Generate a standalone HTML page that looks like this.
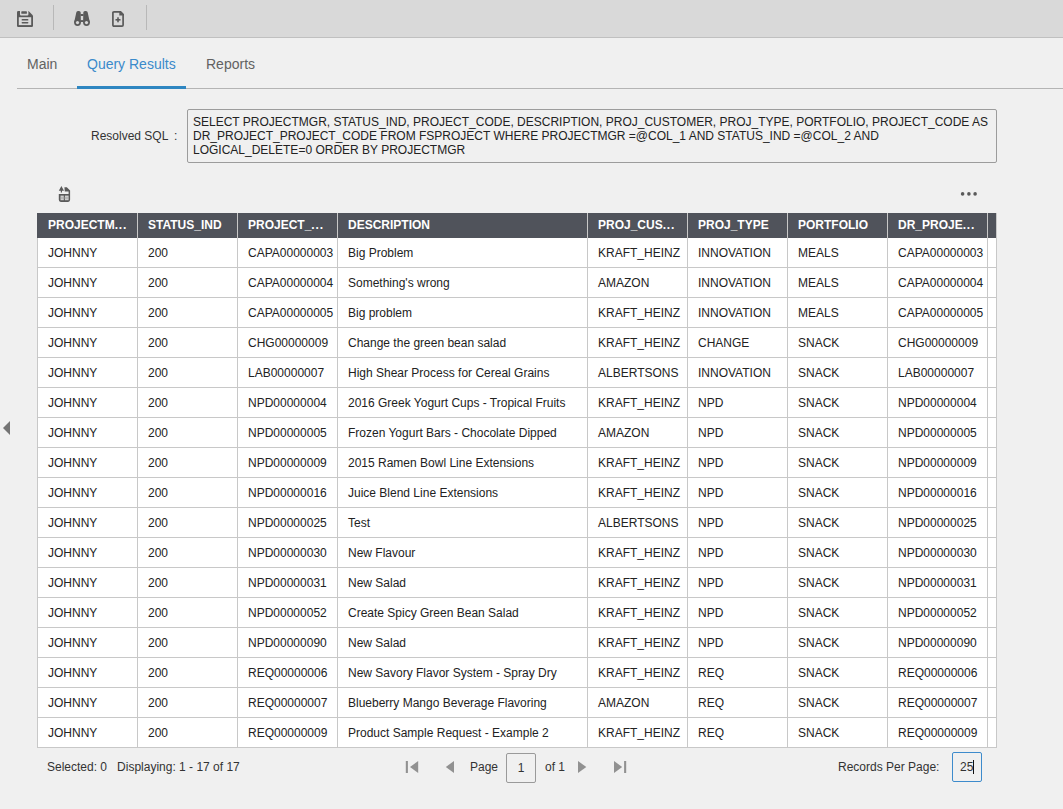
<!DOCTYPE html>
<html><head><meta charset="utf-8">
<style>
*{box-sizing:border-box;margin:0;padding:0}
html,body{width:1063px;height:809px;overflow:hidden;background:#f0f0f0;font-family:"Liberation Sans",sans-serif;color:#333}
.abs{position:absolute}
#toolbar{position:absolute;left:0;top:0;width:1063px;height:38px;background:#d9d9d9;border-bottom:1px solid #c0c0c0}
.sep{position:absolute;top:5px;width:1px;height:25px;background:#b8b8b8}
#tabline{position:absolute;left:17px;top:88px;width:1046px;height:1px;background:#b4b4b4}
#tabact{position:absolute;left:77px;top:86px;width:109px;height:3px;background:#2e86c1}
.tab{position:absolute;top:56px;font-size:14px;color:#626262;white-space:nowrap}
.lbl{position:absolute;font-size:12px;color:#333;white-space:pre}
#sqlbox{position:absolute;left:187px;top:109px;width:810px;height:54px;border:1px solid #9c9c9c;border-radius:2px;background:#f0f0f0;font-size:12px;line-height:14px;padding:5px 5px;color:#222}
table{position:absolute;left:37px;top:213px;border-collapse:separate;border-spacing:0;table-layout:fixed;width:960px;font-size:12px}
th{background:#50535b;color:#fff;font-weight:bold;text-align:left;height:25px;padding:0 0 1px 10px;border-right:1px solid #c8c8c8;white-space:nowrap;overflow:hidden}
th:first-child{padding-left:10px;border-left:1px solid #50535b}
th i{font-style:normal;letter-spacing:0.8px}
td{background:#fff;height:30px;padding:0 0 0 10px;border-right:1px solid #c8c8c8;border-bottom:1px solid #c8c8c8;white-space:nowrap;overflow:hidden;color:#222}
td:first-child{padding-left:10px;border-left:1px solid #c8c8c8}
.pbox{position:absolute;border:1px solid #9a9a9a;border-radius:2px;background:#f0f0f0;font-size:12px;text-align:center}
</style></head><body>
<div id="toolbar">
 <div class="sep" style="left:53px"></div>
 <div class="sep" style="left:146px"></div>
 <svg class="abs" style="left:17px;top:11px" width="16" height="16" viewBox="0 0 16 16">
<path d="M1.2,0 H11.6 L16,4.4 V14.8 Q16,16 14.8,16 H1.2 Q0,16 0,14.8 V1.2 Q0,0 1.2,0 Z" fill="#5a5a5a"/>
<path d="M3,0 H11.4 V3.6 Q11.4,4.6 10.4,4.6 H4 Q3,4.6 3,3.6 Z" fill="#d9d9d9"/>
<rect x="4.3" y="0.3" width="5.6" height="2.5" rx="0.6" fill="#5a5a5a"/>
<rect x="1.8" y="6.2" width="12.4" height="7.9" fill="#d9d9d9"/>
<rect x="4.6" y="8.1" width="6.8" height="1.5" rx="0.7" fill="#5a5a5a"/>
<rect x="4.6" y="10.9" width="6.8" height="1.5" rx="0.7" fill="#5a5a5a"/>
</svg>
 <svg class="abs" style="left:74px;top:11px" width="16" height="15" viewBox="0 0 16 15">
<path d="M2.3,1.6 Q2.4,0 4,0 H5 Q6.6,0 6.7,1.6 L6.9,11.6 H0.1 Z" fill="#5a5a5a"/>
<path d="M13.7,1.6 Q13.6,0 12,0 H11 Q9.4,0 9.3,1.6 L9.1,11.6 H15.9 Z" fill="#5a5a5a"/>
<circle cx="3.5" cy="11.6" r="3.4" fill="#5a5a5a"/>
<circle cx="12.5" cy="11.6" r="3.4" fill="#5a5a5a"/>
<circle cx="3.5" cy="11.6" r="1.6" fill="#d9d9d9"/>
<circle cx="12.5" cy="11.6" r="1.6" fill="#d9d9d9"/>
<rect x="6.5" y="3" width="3" height="2" fill="#5a5a5a"/>
<rect x="6.5" y="9.1" width="3" height="1.9" fill="#5a5a5a"/>
</svg>
 <svg class="abs" style="left:112px;top:11px" width="12" height="16" viewBox="0 0 12 16">
<path d="M2,0.9 H8.4 L11.1,3.6 V14 Q11.1,15.1 10,15.1 H2 Q0.9,15.1 0.9,14 V2 Q0.9,0.9 2,0.9 Z" fill="none" stroke="#5a5a5a" stroke-width="1.7"/>
<path d="M7.3,0.1 H8.7 L11.9,3.3 V4.6 H7.3 Z" fill="#5a5a5a"/>
<rect x="3.5" y="8" width="5" height="1.6" fill="#5a5a5a"/>
<rect x="5.2" y="6.3" width="1.6" height="5" fill="#5a5a5a"/>
</svg>
</div>
<div class="tab" style="left:27px">Main</div>
<div class="tab" style="left:87px;color:#3a8acb">Query Results</div>
<div class="tab" style="left:206px">Reports</div>
<div id="tabline"></div>
<div id="tabact"></div>
<div class="lbl" style="left:91px;top:129px">Resolved SQL</div>
<div class="lbl" style="left:174px;top:129px">:</div>
<div id="sqlbox">SELECT PROJECTMGR, STATUS_IND, PROJECT_CODE, DESCRIPTION, PROJ_CUSTOMER, PROJ_TYPE, PORTFOLIO, PROJECT_CODE AS DR_PROJECT_PROJECT_CODE FROM FSPROJECT WHERE PROJECTMGR =@COL_1 AND STATUS_IND =@COL_2 AND LOGICAL_DELETE=0 ORDER BY PROJECTMGR</div>
<svg class="abs" style="left:58px;top:185px" width="14" height="18" viewBox="0 0 14 18">
<path d="M3.4,1 L6,5.8 H4 V7.6 H2.8 V5.8 H0.8 Z" fill="#5a5a5a"/>
<path d="M6.4,2.2 H8.8 L12.1,5.5 V14.8 Q12.1,16.9 10.1,16.9 H2.8 Q0.8,16.9 0.8,14.8 V8.9 H10.6 V6.6 H6.8 Z" fill="#5a5a5a"/>
<rect x="2.5" y="10.6" width="3.3" height="4.6" fill="#cfcfcf"/>
<rect x="6.9" y="10.6" width="3.7" height="4.6" fill="#cfcfcf"/>
<rect x="2.5" y="12.6" width="8.1" height="0.8" fill="#999"/>
</svg>
<svg class="abs" style="left:958px;top:189px" width="22" height="9" viewBox="0 0 22 9">
<circle cx="4.6" cy="4.9" r="1.8" fill="#5a5a5a"/><circle cx="10.9" cy="4.9" r="1.8" fill="#5a5a5a"/><circle cx="17.1" cy="4.9" r="1.8" fill="#5a5a5a"/>
</svg>
<svg class="abs" style="left:2px;top:420px" width="10" height="16" viewBox="0 0 10 16"><path d="M1,8 L8,1 V15 Z" fill="#747474"/></svg>
<table>
<colgroup><col style="width:101px"><col style="width:100px"><col style="width:100px"><col style="width:250px"><col style="width:100px"><col style="width:100px"><col style="width:100px"><col style="width:100px"><col style="width:9px"></colgroup>
<tr><th>PROJECTM<i>...</i></th><th>STATUS_IND</th><th>PROJECT_<i>...</i></th><th>DESCRIPTION</th><th>PROJ_CUS<i>...</i></th><th>PROJ_TYPE</th><th>PORTFOLIO</th><th>DR_PROJE<i>...</i></th><th></th></tr>
<tr><td>JOHNNY</td><td>200</td><td>CAPA00000003</td><td>Big Problem</td><td>KRAFT_HEINZ</td><td>INNOVATION</td><td>MEALS</td><td>CAPA00000003</td><td></td></tr>
<tr><td>JOHNNY</td><td>200</td><td>CAPA00000004</td><td>Something's wrong</td><td>AMAZON</td><td>INNOVATION</td><td>MEALS</td><td>CAPA00000004</td><td></td></tr>
<tr><td>JOHNNY</td><td>200</td><td>CAPA00000005</td><td>Big problem</td><td>KRAFT_HEINZ</td><td>INNOVATION</td><td>MEALS</td><td>CAPA00000005</td><td></td></tr>
<tr><td>JOHNNY</td><td>200</td><td>CHG00000009</td><td>Change the green bean salad</td><td>KRAFT_HEINZ</td><td>CHANGE</td><td>SNACK</td><td>CHG00000009</td><td></td></tr>
<tr><td>JOHNNY</td><td>200</td><td>LAB00000007</td><td>High Shear Process for Cereal Grains</td><td>ALBERTSONS</td><td>INNOVATION</td><td>SNACK</td><td>LAB00000007</td><td></td></tr>
<tr><td>JOHNNY</td><td>200</td><td>NPD00000004</td><td>2016 Greek Yogurt Cups - Tropical Fruits</td><td>KRAFT_HEINZ</td><td>NPD</td><td>SNACK</td><td>NPD00000004</td><td></td></tr>
<tr><td>JOHNNY</td><td>200</td><td>NPD00000005</td><td>Frozen Yogurt Bars - Chocolate Dipped</td><td>AMAZON</td><td>NPD</td><td>SNACK</td><td>NPD00000005</td><td></td></tr>
<tr><td>JOHNNY</td><td>200</td><td>NPD00000009</td><td>2015 Ramen Bowl Line Extensions</td><td>KRAFT_HEINZ</td><td>NPD</td><td>SNACK</td><td>NPD00000009</td><td></td></tr>
<tr><td>JOHNNY</td><td>200</td><td>NPD00000016</td><td>Juice Blend Line Extensions</td><td>KRAFT_HEINZ</td><td>NPD</td><td>SNACK</td><td>NPD00000016</td><td></td></tr>
<tr><td>JOHNNY</td><td>200</td><td>NPD00000025</td><td>Test</td><td>ALBERTSONS</td><td>NPD</td><td>SNACK</td><td>NPD00000025</td><td></td></tr>
<tr><td>JOHNNY</td><td>200</td><td>NPD00000030</td><td>New Flavour</td><td>KRAFT_HEINZ</td><td>NPD</td><td>SNACK</td><td>NPD00000030</td><td></td></tr>
<tr><td>JOHNNY</td><td>200</td><td>NPD00000031</td><td>New Salad</td><td>KRAFT_HEINZ</td><td>NPD</td><td>SNACK</td><td>NPD00000031</td><td></td></tr>
<tr><td>JOHNNY</td><td>200</td><td>NPD00000052</td><td>Create Spicy Green Bean Salad</td><td>KRAFT_HEINZ</td><td>NPD</td><td>SNACK</td><td>NPD00000052</td><td></td></tr>
<tr><td>JOHNNY</td><td>200</td><td>NPD00000090</td><td>New Salad</td><td>KRAFT_HEINZ</td><td>NPD</td><td>SNACK</td><td>NPD00000090</td><td></td></tr>
<tr><td>JOHNNY</td><td>200</td><td>REQ00000006</td><td>New Savory Flavor System - Spray Dry</td><td>KRAFT_HEINZ</td><td>REQ</td><td>SNACK</td><td>REQ00000006</td><td></td></tr>
<tr><td>JOHNNY</td><td>200</td><td>REQ00000007</td><td>Blueberry Mango Beverage Flavoring</td><td>AMAZON</td><td>REQ</td><td>SNACK</td><td>REQ00000007</td><td></td></tr>
<tr><td>JOHNNY</td><td>200</td><td>REQ00000009</td><td>Product Sample Request - Example 2</td><td>KRAFT_HEINZ</td><td>REQ</td><td>SNACK</td><td>REQ00000009</td><td></td></tr>

</table>
<div class="lbl" style="left:47px;top:760px">Selected: 0   Displaying: 1 - 17 of 17</div>
<svg class="abs" style="left:400px;top:755px" width="240" height="24" viewBox="0 0 240 24">
<rect x="5.8" y="6" width="2.1" height="12" fill="#919191"/>
<path d="M10,12 L18.2,6 V18 Z" fill="#919191"/>
<path d="M45.8,12 L54,6 V18 Z" fill="#919191"/>
<path d="M186.3,12 L178,6 V18 Z" fill="#919191"/>
<path d="M222.2,12 L214,6 V18 Z" fill="#919191"/>
<rect x="224.1" y="6" width="2.1" height="12" fill="#919191"/>
</svg>
<div class="lbl" style="left:470px;top:760px">Page</div>
<div class="pbox" style="left:506px;top:753px;width:30px;height:30px;line-height:28px">1</div>
<div class="lbl" style="left:545px;top:760px">of 1</div>
<div class="lbl" style="left:838px;top:760px">Records Per Page:</div>
<div class="pbox" style="left:952px;top:752px;width:30px;height:30px;border-color:#3d8bcc;line-height:28px;text-align:left;padding-left:7px">25</div>
<div class="abs" style="left:973px;top:760px;width:1px;height:14px;background:#111"></div>
</body></html>
